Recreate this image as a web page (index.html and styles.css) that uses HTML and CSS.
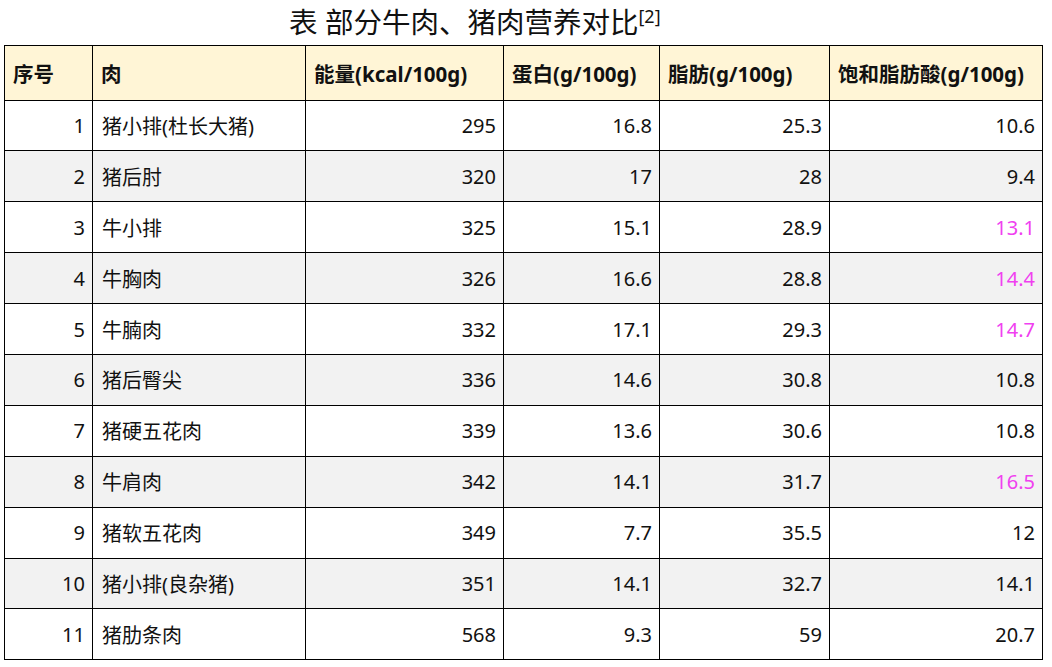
FILE: index.html
```html
<!DOCTYPE html>
<html lang="zh-CN">
<head>
<meta charset="utf-8">
<title>部分牛肉、猪肉营养对比</title>
<link rel="stylesheet" href="styles.css">
</head>
<body>
<div class="title">表 部分牛肉、猪肉营养对比<sup class="ref">[2]</sup></div>
<table class="nutri">
  <colgroup>
    <col class="c1"><col class="c2"><col class="c3"><col class="c4"><col class="c5"><col class="c6">
  </colgroup>
  <thead>
    <tr>
      <th>序号</th><th>肉</th><th>能量(kcal/100g)</th><th>蛋白(g/100g)</th><th>脂肪(g/100g)</th><th>饱和脂肪酸(g/100g)</th>
    </tr>
  </thead>
  <tbody>
    <tr><td class="num">1</td><td>猪小排(杜长大猪)</td><td class="num">295</td><td class="num">16.8</td><td class="num">25.3</td><td class="num">10.6</td></tr>
    <tr><td class="num">2</td><td>猪后肘</td><td class="num">320</td><td class="num">17</td><td class="num">28</td><td class="num">9.4</td></tr>
    <tr><td class="num">3</td><td>牛小排</td><td class="num">325</td><td class="num">15.1</td><td class="num">28.9</td><td class="num hi">13.1</td></tr>
    <tr><td class="num">4</td><td>牛胸肉</td><td class="num">326</td><td class="num">16.6</td><td class="num">28.8</td><td class="num hi">14.4</td></tr>
    <tr><td class="num">5</td><td>牛腩肉</td><td class="num">332</td><td class="num">17.1</td><td class="num">29.3</td><td class="num hi">14.7</td></tr>
    <tr><td class="num">6</td><td>猪后臀尖</td><td class="num">336</td><td class="num">14.6</td><td class="num">30.8</td><td class="num">10.8</td></tr>
    <tr><td class="num">7</td><td>猪硬五花肉</td><td class="num">339</td><td class="num">13.6</td><td class="num">30.6</td><td class="num">10.8</td></tr>
    <tr><td class="num">8</td><td>牛肩肉</td><td class="num">342</td><td class="num">14.1</td><td class="num">31.7</td><td class="num hi">16.5</td></tr>
    <tr><td class="num">9</td><td>猪软五花肉</td><td class="num">349</td><td class="num">7.7</td><td class="num">35.5</td><td class="num">12</td></tr>
    <tr><td class="num">10</td><td>猪小排(良杂猪)</td><td class="num">351</td><td class="num">14.1</td><td class="num">32.7</td><td class="num">14.1</td></tr>
    <tr><td class="num">11</td><td>猪肋条肉</td><td class="num">568</td><td class="num">9.3</td><td class="num">59</td><td class="num">20.7</td></tr>
  </tbody>
</table>
</body>
</html>
```
FILE: styles.css
```css
html, body {
  margin: 0;
  padding: 0;
  background: #ffffff;
}
body {
  font-family: "Noto Sans", "Noto Sans CJK SC", sans-serif;
  color: #111111;
}
.title {
  height: 45px;
  line-height: 45px;
  font-size: 28.5px;
  padding-left: 289px;
  white-space: nowrap;
}
.ref {
  font-size: 18px;
  vertical-align: 10px;
  line-height: 0;
}
.nutri {
  margin-left: 4px;
  border-collapse: collapse;
  table-layout: fixed;
  width: 1039px;
  font-size: 20px;
}
.c1 { width: 88px; }
.c2 { width: 213px; }
.c3 { width: 198px; }
.c4 { width: 156px; }
.c5 { width: 170px; }
.c6 { width: 213px; }
.nutri th, .nutri td {
  border: 1.5px solid #000000;
  padding: 0 8px;
  white-space: nowrap;
}
.nutri th {
  height: 53.5px;
  background: #fff5d6;
  text-align: left;
  font-weight: bold;
  font-size: 20.5px;
}
.nutri td {
  height: 49.9px;
  text-align: left;
}
.nutri td:nth-child(2) {
  padding-left: 9px;
}
.nutri tbody tr:nth-child(even) td {
  background: #f2f2f2;
}
.nutri td.num {
  text-align: right;
  padding-right: 7px;
}
.nutri td.hi {
  color: #f040f0;
}
```
